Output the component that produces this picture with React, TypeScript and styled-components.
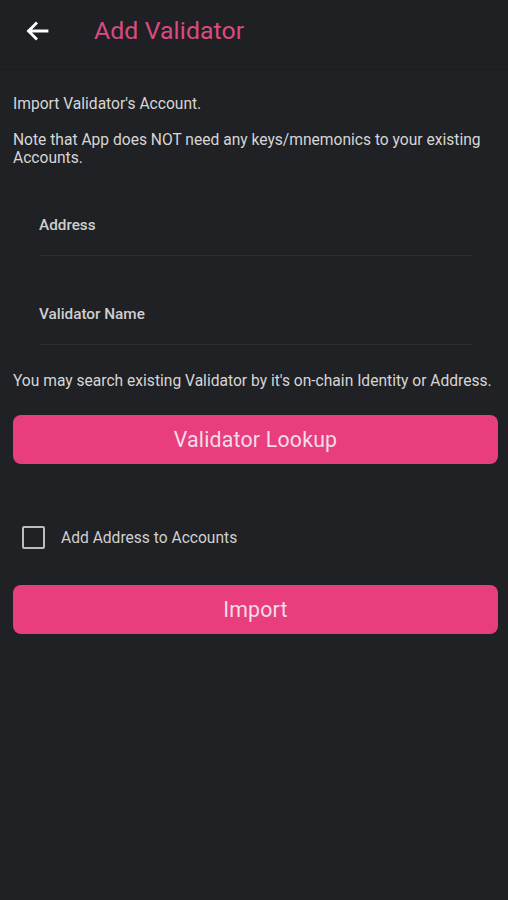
import React from "react";
import styled, { createGlobalStyle } from "styled-components";

const Global = createGlobalStyle`
  html, body { margin: 0; padding: 0; background: #202124; }
  body { font-family: Roboto, "Noto Sans", Arial, sans-serif; }
  * { box-sizing: border-box; }
`;

const Screen = styled.div`
  width: 508px;
  min-height: 900px;
  background: #202124;
  color: #d8d8d8;
  display: flex;
  flex-direction: column;
`;

const Header = styled.header`
  height: 70px;
  display: flex;
  align-items: center;
  padding: 0 0 8px 24px;
  background: #1f2023;
  border-bottom: 1px solid #1c1d20;
`;

const BackButton = styled.button`
  width: 26px;
  height: 26px;
  padding: 0;
  border: none;
  background: none;
  display: flex;
  align-items: center;
  justify-content: center;
  margin-right: 44px;
`;

const Title = styled.h1`
  margin: 0;
  font-size: 24.8px;
  font-weight: 400;
  color: #dc4a82;
  letter-spacing: 0.1px;
`;

const Body = styled.main`
  display: flex;
  flex-direction: column;
  padding: 25px 10px 0 13px;
`;

const Text = styled.p<{ $mt?: number }>`
  margin: ${(p) => p.$mt ?? 0}px 0 0 0;
  font-size: 15.6px;
  line-height: 18px;
  color: #d6d6d6;
`;

const Field = styled.div<{ $mt: number }>`
  margin: ${(p) => p.$mt}px 26px 0 27px;
  height: 40px;
  border-bottom: 1px solid #2e2f33;
  display: flex;
  align-items: flex-start;
`;

const FieldLabel = styled.label`
  font-size: 15.3px;
  line-height: 18px;
  color: #cfcfcf;
  font-weight: 500;
  margin-left: -1px;
`;

const PinkButton = styled.button<{ $mt: number }>`
  margin: ${(p) => p.$mt}px 0 0 0;
  width: 485px;
  height: 49px;
  border: none;
  border-radius: 8px;
  background: #e83e7e;
  color: #f4dce6;
  font-family: Roboto, "Noto Sans", Arial, sans-serif;
  font-size: 21.3px;
  font-weight: 400;
  letter-spacing: 0.2px;
`;

const CheckRow = styled.div`
  margin: 62px 0 0 9px;
  display: flex;
  align-items: center;
  gap: 16px;
`;

const Box = styled.span`
  width: 23px;
  height: 23px;
  border: 2px solid #bdbdbd;
  border-radius: 2px;
`;

const CheckLabel = styled.span`
  font-size: 15.6px;
  color: #d0d0d0;
`;

export default function App() {
  return (
    <Screen>
      <Global />
      <Header>
        <BackButton aria-label="Back">
          <svg width="25" height="24" viewBox="0 0 25 24">
            <path
              d="M22 12H4M11 4.5l-7.5 7.5 7.5 7.5"
              fill="none"
              stroke="#ffffff"
              strokeWidth="2.8"
              strokeLinecap="square"
            />
          </svg>
        </BackButton>
        <Title>Add Validator</Title>
      </Header>
      <Body>
        <Text>Import Validator's Account.</Text>
        <Text $mt={18}>
          Note that App does NOT need any keys/mnemonics to your existing Accounts.
        </Text>
        <Field $mt={49}>
          <FieldLabel>Address</FieldLabel>
        </Field>
        <Field $mt={49}>
          <FieldLabel>Validator Name</FieldLabel>
        </Field>
        <Text $mt={27}>
          You may search existing Validator by it's on-chain Identity or Address.
        </Text>
        <PinkButton $mt={25}>Validator Lookup</PinkButton>
        <CheckRow>
          <Box />
          <CheckLabel>Add Address to Accounts</CheckLabel>
        </CheckRow>
        <PinkButton $mt={36}>Import</PinkButton>
      </Body>
    </Screen>
  );
}
